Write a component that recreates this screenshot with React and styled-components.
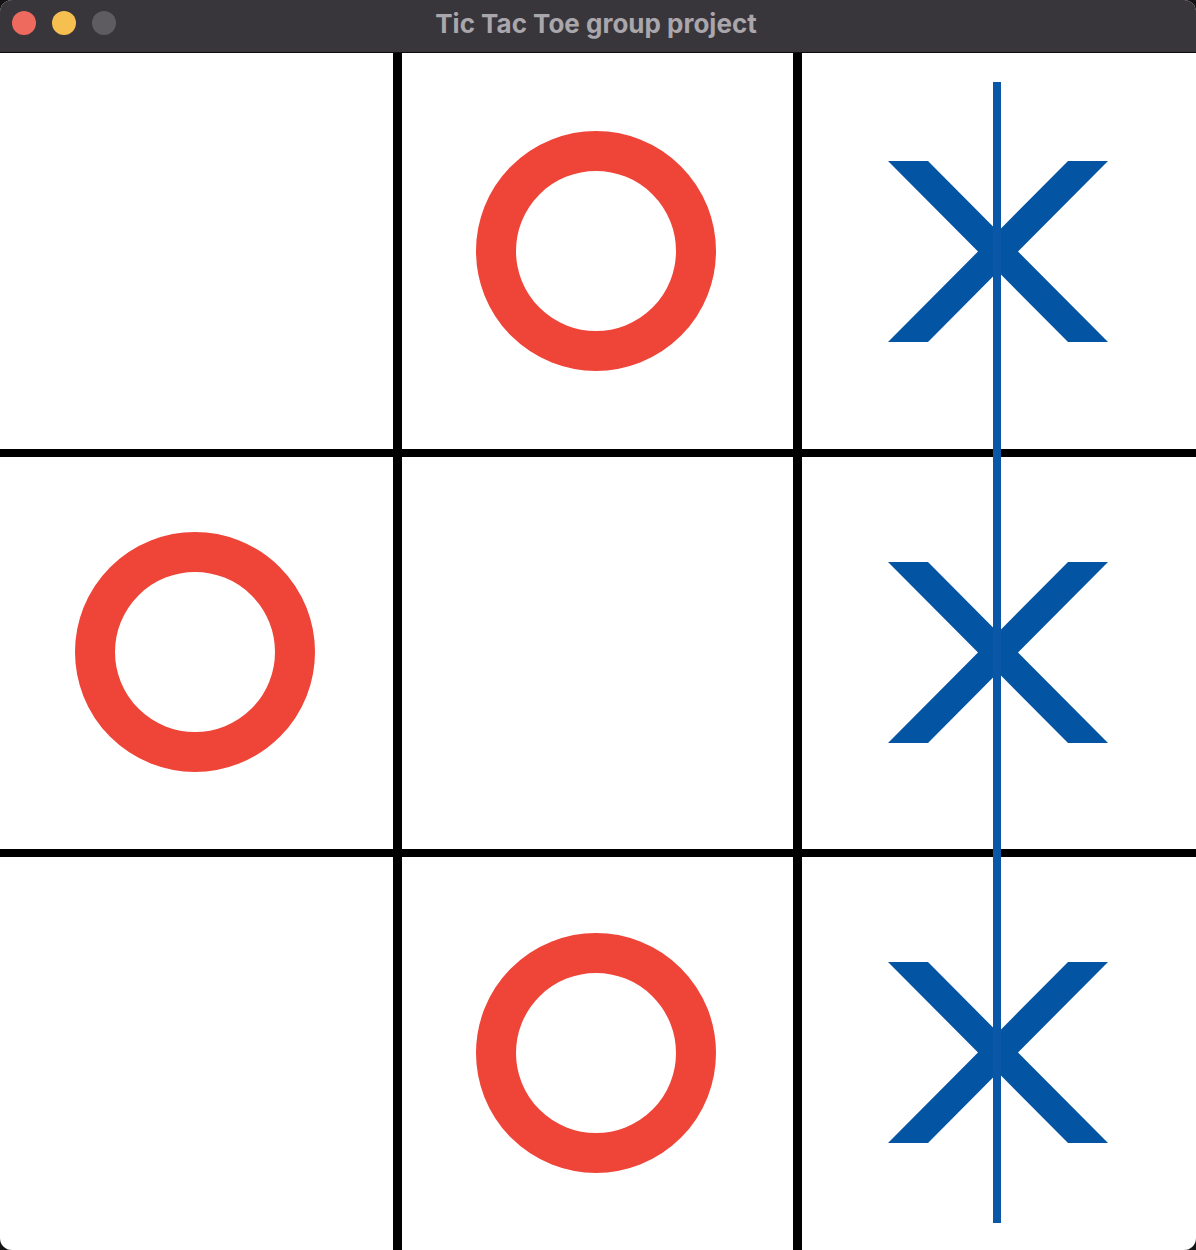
import styled, { createGlobalStyle } from "styled-components";

const GlobalStyle = createGlobalStyle`
    html, body {
        margin: 0;
        padding: 0;
        background: #141414;
    }
    #root {
        width: 1196px;
        height: 1250px;
    }
`

const Window = styled.div`
    width: 1196px;
    height: 1250px;
    display: flex;
    flex-direction: column;
    border-radius: 12px;
    overflow: hidden;
    background: #ffffff;
`

const TitleBar = styled.div`
    position: relative;
    height: 52px;
    flex: none;
    display: flex;
    align-items: center;
    justify-content: center;
    background: #38353b;
    border-bottom: 1px solid #0c0c0c;
    .lights {
        position: absolute;
        left: 12px;
        top: 11px;
        display: flex;
        gap: 16px;
    }
    h1 {
        margin: 0 0 6px;
        padding-right: 4px;
        font-family: Inter, "Liberation Sans", sans-serif;
        font-weight: 700;
        font-size: 26px;
        letter-spacing: 0;
        color: #a9a6ac;
    }
`

const Light = styled.span`
    width: 24px;
    height: 24px;
    border-radius: 50%;
    background: ${props => props.color};
`

const Board = styled.div`
    position: relative;
    flex: 1;
    display: grid;
    grid-template-columns: 393px 391px 1fr;
    grid-template-rows: 396px 392px 1fr;
    column-gap: 9px;
    row-gap: 8px;
    background: #000000;
`

const Cell = styled.div`
    background: #ffffff;
    display: flex;
    align-items: center;
    justify-content: center;
    padding-right: 3px;
    padding-bottom: ${props => props.lift || 0}px;
`

const WinLine = styled.div`
    position: absolute;
    left: 993px;
    top: 29px;
    width: 8px;
    height: 1141px;
    background: #0b57a7;
`

const Circle = () => (
    <svg width="240" height="240" viewBox="0 0 240 240">
        <circle cx="120" cy="120" r="100" fill="none" stroke="#ef4438" strokeWidth="40" />
    </svg>
)

const Cross = () => (
    <svg width="220" height="181" viewBox="-110 -90.5 220 181">
        <polygon
            fill="#0454a4"
            points="-110,-90.5 -70,-90.5 0,-20 70,-90.5 110,-90.5 20,0 110,90.5 70,90.5 0,20 -70,90.5 -110,90.5 -20,0"
        />
    </svg>
)

const board = [
    ["", "O", "X"],
    ["O", "", "X"],
    ["", "O", "X"],
]

export default function App() {
    return (
        <>
            <GlobalStyle />
            <Window>
                <TitleBar>
                    <div className="lights">
                        <Light color="#ee6a5f" />
                        <Light color="#f5c04f" />
                        <Light color="#5e5b61" />
                    </div>
                    <h1>Tic Tac Toe group project</h1>
                </TitleBar>
                <Board>
                    {board.map((row, r) =>
                        row.map((mark, c) => (
                            <Cell key={`${r}-${c}`} lift={r === 0 ? 0 : 2}>
                                {mark === "O" && <Circle />}
                                {mark === "X" && <Cross />}
                            </Cell>
                        ))
                    )}
                    <WinLine />
                </Board>
            </Window>
        </>
    )
}
